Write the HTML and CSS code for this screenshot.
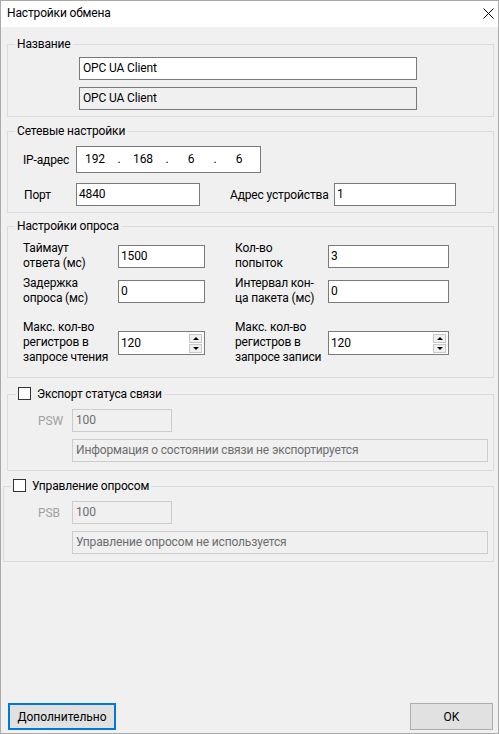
FILE: index.html
```html
<!DOCTYPE html>
<html lang="ru">
<head>
  <meta charset="UTF-8">
  <title>Настройки обмена</title>
  <link rel="stylesheet" href="styles.css">
</head>
<body>

  <div class="window">
    <div class="titlebar">
      <span class="title">Настройки обмена</span>
      <svg class="close" width="11" height="11" viewBox="0 0 11 11">
        <path d="M0.5 0.5 L10.5 10.5 M10.5 0.5 L0.5 10.5" stroke="#000" stroke-width="1" fill="none"/>
      </svg>
    </div>

    <div class="content">
      <!-- Название -->
      <fieldset class="group group-name">
        <legend>Название</legend>
        <div class="group-body">
          <div class="box name-box">OPC UA Client</div>
          <div class="box name-box readonly">OPC UA Client</div>
        </div>
      </fieldset>

      <!-- Сетевые настройки -->
      <fieldset class="group group-net">
        <legend>Сетевые настройки</legend>
        <div class="group-body">
          <div class="net-row">
            <span class="net-label">IP-адрес</span>
            <div class="box ip-box">
              <span class="ip-part">192</span><span class="ip-dot">.</span>
              <span class="ip-part">168</span><span class="ip-dot">.</span>
              <span class="ip-part">6</span><span class="ip-dot">.</span>
              <span class="ip-part">6</span>
            </div>
          </div>
          <div class="net-row port-row">
            <span class="net-label port-label">Порт</span>
            <div class="box port-box">4840</div>
            <span class="addr-label">Адрес устройства</span>
            <div class="box addr-box">1</div>
          </div>
        </div>
      </fieldset>

      <!-- Настройки опроса -->
      <fieldset class="group group-poll">
        <legend>Настройки опроса</legend>
        <div class="group-body poll-grid">
          <span class="poll-label">Таймаут<br>ответа (мс)</span>
          <div class="cell"><div class="box poll-box">1500</div></div>
          <span class="poll-label">Кол-во<br>попыток</span>
          <div class="cell"><div class="box poll-box wide">3</div></div>

          <span class="poll-label row2">Задержка<br>опроса (мс)</span>
          <div class="cell row2"><div class="box poll-box">0</div></div>
          <span class="poll-label row2">Интервал кон-<br>ца пакета (мс)</span>
          <div class="cell row2"><div class="box poll-box wide">0</div></div>

          <span class="poll-label row3">Макс. кол-во<br>регистров в<br>запросе чтения</span>
          <div class="cell row3">
            <div class="box poll-box spin">120
              <span class="spin-btns"><span class="spin-up"></span><span class="spin-down"></span></span>
            </div>
          </div>
          <span class="poll-label row3">Макс. кол-во<br>регистров в<br>запросе записи</span>
          <div class="cell row3">
            <div class="box poll-box wide spin">120
              <span class="spin-btns"><span class="spin-up"></span><span class="spin-down"></span></span>
            </div>
          </div>
        </div>
      </fieldset>

      <!-- Экспорт статуса связи -->
      <fieldset class="group group-psw">
        <legend><span class="check"></span>Экспорт статуса связи</legend>
        <div class="group-body">
          <div class="off-row">
            <span class="off-label">PSW</span>
            <div class="box off-box">100</div>
          </div>
          <div class="box off-box info">Информация о состоянии связи не экспортируется</div>
        </div>
      </fieldset>

      <!-- Управление опросом -->
      <fieldset class="group group-psb">
        <legend><span class="check"></span>Управление опросом</legend>
        <div class="group-body">
          <div class="off-row">
            <span class="off-label">PSB</span>
            <div class="box off-box">100</div>
          </div>
          <div class="box off-box info">Управление опросом не используется</div>
        </div>
      </fieldset>
    </div>

    <div class="footer">
      <button class="btn btn-default">Дополнительно</button>
      <button class="btn btn-ok">OK</button>
    </div>
  </div>

</body>
</html>
```

FILE: styles.css
```css
body {
  margin: 0;
  font-family: Roboto, "Noto Sans", sans-serif;
  font-size: 12px;
  letter-spacing: -0.15px;
  color: #000;
}
.window {
  width: 499px;
  height: 734px;
  box-sizing: border-box;
  border: 1px solid #aaa;
  background: #f0f0f0;
  display: flex;
  flex-direction: column;
}

/* заголовок окна */
.titlebar {
  height: 26px;
  background: #fff;
  display: flex;
  align-items: center;
  justify-content: space-between;
  padding: 0 4px 0 6px;
}
.title {
  line-height: 16px;
  margin-top: -2px;
}
.close {
  margin-top: -2px;
}

.content {
  padding: 9px 4px 0 6px;
}

/* group box */
.group {
  margin: 0;
  padding: 0;
  border: 1px solid #dcdcdc;
  min-width: 0;
}
.group legend {
  margin-left: 7px;
  padding: 0 2px;
  line-height: 16px;
  height: 16px;
}
.group-net { margin-top: 6px; }
.group-poll { margin-top: 5px; }
.group-psw { margin-top: 8px; }
.group-psb { margin-top: 7px; margin-left: -4px; }

/* поля ввода */
.box {
  box-sizing: border-box;
  height: 23px;
  line-height: 21px;
  border: 1px solid #7a7a7a;
  background: #fff;
  padding: 0 3px;
  white-space: nowrap;
}
.box.readonly {
  background: #f0f0f0;
}

.group-name .group-body {
  padding: 5px 0 6px 71px;
}
.name-box {
  width: 338px;
}
.name-box + .name-box {
  margin-top: 7px;
}

.group-net .group-body {
  padding: 7px 0 6px 15px;
}
.net-row {
  display: flex;
  align-items: center;
}
.net-label {
  width: 53px;
}
.port-label {
  padding-left: 1px;
  width: 52px;
}
.ip-box {
  width: 185px;
  height: 27px;
  line-height: 25px;
  padding: 0;
  display: flex;
}
.ip-part {
  width: 36px;
  text-align: center;
}
.ip-dot {
  width: 12px;
  text-align: center;
}
.port-row {
  margin-top: 10px;
}
.port-box {
  width: 124px;
  padding-left: 2px;
}
.addr-label {
  margin-left: 30px;
  width: 104px;
}
.addr-box {
  width: 122px;
  padding-left: 2px;
}

/* настройки опроса */
.group-poll .group-body {
  padding: 7px 0 12px 15px;
}
.poll-grid {
  display: grid;
  grid-template-columns: 95px 117px 93px 121px;
  align-items: center;
}
.poll-label {
  line-height: 15px;
}
.row2 { margin-top: 5px; }
.row3 { margin-top: 14px; }
.poll-box {
  width: 87px;
  padding-left: 2px;
}
.poll-box.wide {
  width: 121px;
}
.spin {
  position: relative;
  height: 24px;
  line-height: 22px;
}
.spin-btns {
  position: absolute;
  top: 2px;
  right: 2px;
  width: 13px;
  display: flex;
  flex-direction: column;
}
.spin-up,
.spin-down {
  height: 9px;
  box-sizing: border-box;
  border: 1px solid #c8c8c8;
  background: #f0f0f0;
  position: relative;
}
.spin-down {
  margin-top: 1px;
}
.spin-up::after,
.spin-down::after {
  content: "";
  position: absolute;
  left: 3px;
  top: 2px;
  border-left: 3px solid transparent;
  border-right: 3px solid transparent;
}
.spin-up::after {
  border-bottom: 3px solid #000;
}
.spin-down::after {
  border-top: 3px solid #000;
}

/* отключённые группы */
.check {
  display: inline-block;
  width: 13px;
  height: 13px;
  box-sizing: border-box;
  border: 1px solid #333;
  background: #fff;
  vertical-align: -2px;
  margin-right: 6px;
}
.group-psw legend {
  margin-left: 8px;
}
.group-psw .group-body {
  padding: 7px 5px 8px 30px;
}
.group-psb .group-body {
  padding: 7px 5px 7px 34px;
}
.off-row {
  display: flex;
  align-items: center;
}
.off-label {
  width: 34px;
  color: #a0a0a0;
}
.off-box {
  width: 100px;
  border-color: #cccccc;
  background: #f0f0f0;
  color: #6d6d6d;
}
.off-box.info {
  width: 416px;
  margin: 7px 0 0 34px;
}

/* кнопки */
.footer {
  margin-top: auto;
  display: flex;
  justify-content: space-between;
  padding: 0 5px 3px 7px;
}
.btn {
  font: inherit;
  color: #000;
  height: 27px;
  box-sizing: border-box;
  background: #e1e1e1;
  border: 1px solid #adadad;
  padding: 0;
}
.btn-default {
  width: 108px;
  border: 2px solid #0078d7;
}
.btn-ok {
  width: 83px;
}
```
